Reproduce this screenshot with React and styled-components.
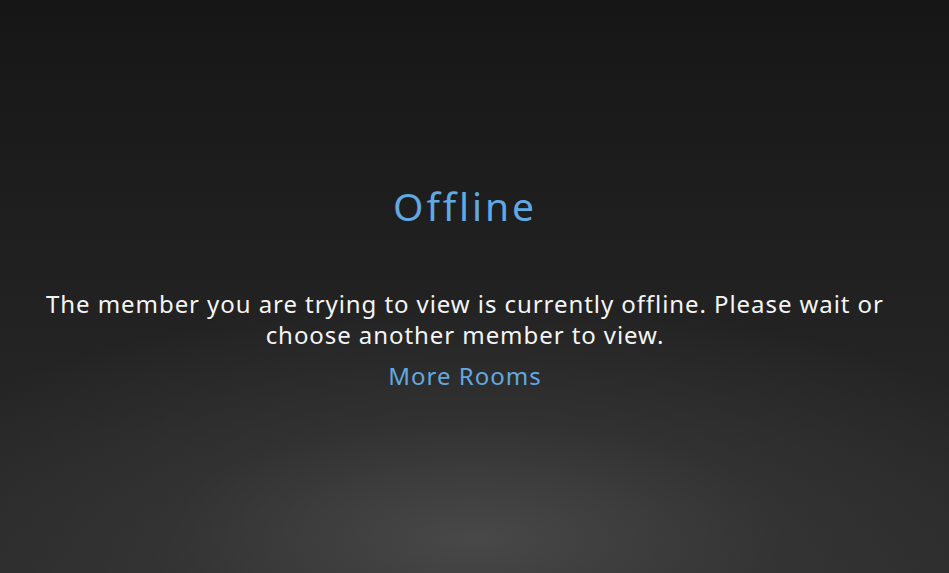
import React from "react";
import styled, { createGlobalStyle } from "styled-components";

const GlobalStyle = createGlobalStyle`
  html, body {
    margin: 0;
    padding: 0;
    height: 100%;
  }
  #root {
    height: 100%;
  }
`;

const Page = styled.div`
  height: 100vh;
  display: flex;
  flex-direction: column;
  align-items: center;
  padding: 180px 19px 0 0;
  box-sizing: border-box;
  background:
    radial-gradient(ellipse 620px 240px at 50% 94%, rgba(74, 74, 74, 0.95) 0%, rgba(60, 60, 60, 0.5) 50%, rgba(44, 44, 44, 0) 100%),
    linear-gradient(180deg, #161616 0%, #1f1f1f 40%, #2b2b2b 100%);
  font-family: "Noto Sans", "Open Sans", sans-serif;
  text-align: center;
`;

const Title = styled.h1`
  margin: 0;
  font-size: 39px;
  font-weight: 400;
  line-height: 52px;
  letter-spacing: 2.9px;
  color: #61a9e0;
`;

const Message = styled.p`
  margin: 56px 0 0;
  width: 890px;
  font-size: 24px;
  line-height: 31px;
  letter-spacing: 0.93px;
  color: #f4f4f4;
`;

const Link = styled.a`
  margin-top: 10px;
  font-size: 24px;
  line-height: 32px;
  letter-spacing: 1px;
  color: #61a9e0;
  text-decoration: none;
  cursor: pointer;
`;

const App = () => (
  <>
    <GlobalStyle />
    <Page>
      <Title>Offline</Title>
      <Message>
        The member you are trying to view is currently offline. Please wait or
        choose another member to view.
      </Message>
      <Link>More Rooms</Link>
    </Page>
  </>
);

export default App;
